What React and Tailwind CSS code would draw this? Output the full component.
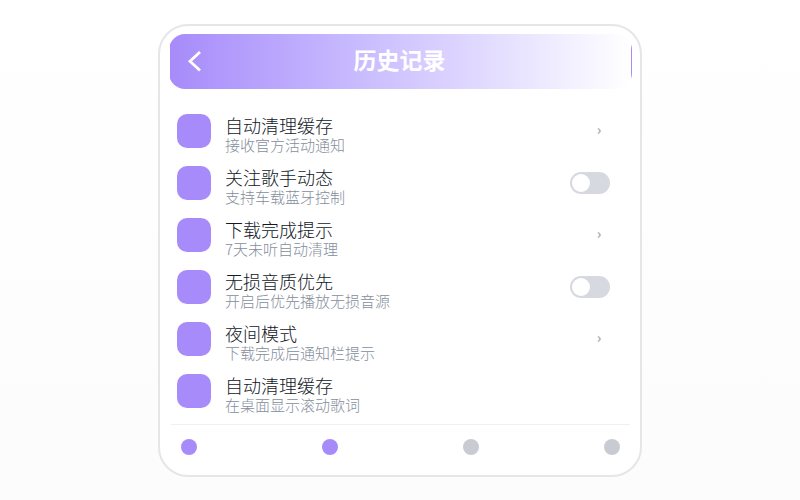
import React, { useState } from "react";

const items = [
  { title: "自动清理缓存", desc: "接收官方活动通知", type: "link" },
  { title: "关注歌手动态", desc: "支持车载蓝牙控制", type: "switch" },
  { title: "下载完成提示", desc: "7天未听自动清理", type: "link" },
  { title: "无损音质优先", desc: "开启后优先播放无损音源", type: "switch" },
  { title: "夜间模式", desc: "下载完成后通知栏提示", type: "link" },
  { title: "自动清理缓存", desc: "在桌面显示滚动歌词", type: "none" },
];

const tabs = [
  { label: "首页", active: true },
  { label: "发现", active: true },
  { label: "收藏", active: false },
  { label: "我的", active: false },
];

const Header = () => {
  return (
    <header className="grid grid-cols-[48px_1fr_50px] items-center h-[55px] rounded-2xl border border-transparent bg-linear-to-r from-[#a78bfa] to-white text-white">
      <button
        type="button"
        aria-label="返回"
        className="flex h-full items-center justify-center"
      >
        <svg
          className="h-6 w-6"
          viewBox="0 0 24 24"
          fill="none"
          stroke="currentColor"
          strokeWidth="2.8"
        >
          <path d="M18 3 L8 12.3 L18 21.5" />
        </svg>
      </button>
      <h1 className="pb-1 text-center text-[23px] leading-8 font-bold">
        历史记录
      </h1>
    </header>
  );
};

const Toggle = ({ label }) => {
  const [on, setOn] = useState(false);

  return (
    <label className="relative flex cursor-pointer">
      <input
        type="checkbox"
        role="switch"
        aria-label={label}
        checked={on}
        onChange={() => setOn(!on)}
        className="peer h-[22px] w-10 appearance-none rounded-full bg-[#d6d9e0] checked:bg-[#a78bfa]"
      />
      <span className="pointer-events-none absolute top-0.5 left-0.5 h-[18px] w-[18px] rounded-full bg-white peer-checked:left-5" />
    </label>
  );
};

const Row = ({ item }) => {
  return (
    <li className="flex items-center h-[52px]">
      <span className="h-[34px] w-[34px] shrink-0 rounded-[10px] bg-[#a78bfa]" />
      <div className="ml-3.5 flex-1 pt-2">
        <p className="text-lg leading-5 text-[#111827]">{item.title}</p>
        <p className="text-[15px] leading-5 text-[#848e9c]">{item.desc}</p>
      </div>
      {item.type === "link" && (
        <button
          type="button"
          aria-label={item.title}
          className="w-[22px] pb-1 text-sm leading-5 font-bold text-[#a3a9b5]"
        >
          ›
        </button>
      )}
      {item.type === "switch" && <Toggle label={item.title} />}
    </li>
  );
};

const App = () => {
  return (
    <div className="flex min-h-screen items-center justify-center bg-linear-to-b from-white to-[#fcfcfd] font-['Noto_Sans_CJK_SC',sans-serif] font-light">
      <main className="w-full max-w-[484px] rounded-[30px] border-2 border-[#e5e5ea] bg-white pt-2 pr-2 pb-[5px] pl-[9px]">
        <Header />
        <ul className="mt-4 pl-2 pr-[22px]">
          {items.map((item, index) => (
            <Row key={index} item={item} />
          ))}
        </ul>
        <nav className="mx-0.5 mt-[7px] flex h-[46px] items-center justify-between border-t border-[#f0f0f3] px-2.5">
          {tabs.map((tab) => (
            <button
              key={tab.label}
              type="button"
              aria-label={tab.label}
              className={`h-4 w-4 rounded-full ${
                tab.active ? "bg-[#a78bfa]" : "bg-[#c8ccd2]"
              }`}
            />
          ))}
        </nav>
      </main>
    </div>
  );
};

export default App;
